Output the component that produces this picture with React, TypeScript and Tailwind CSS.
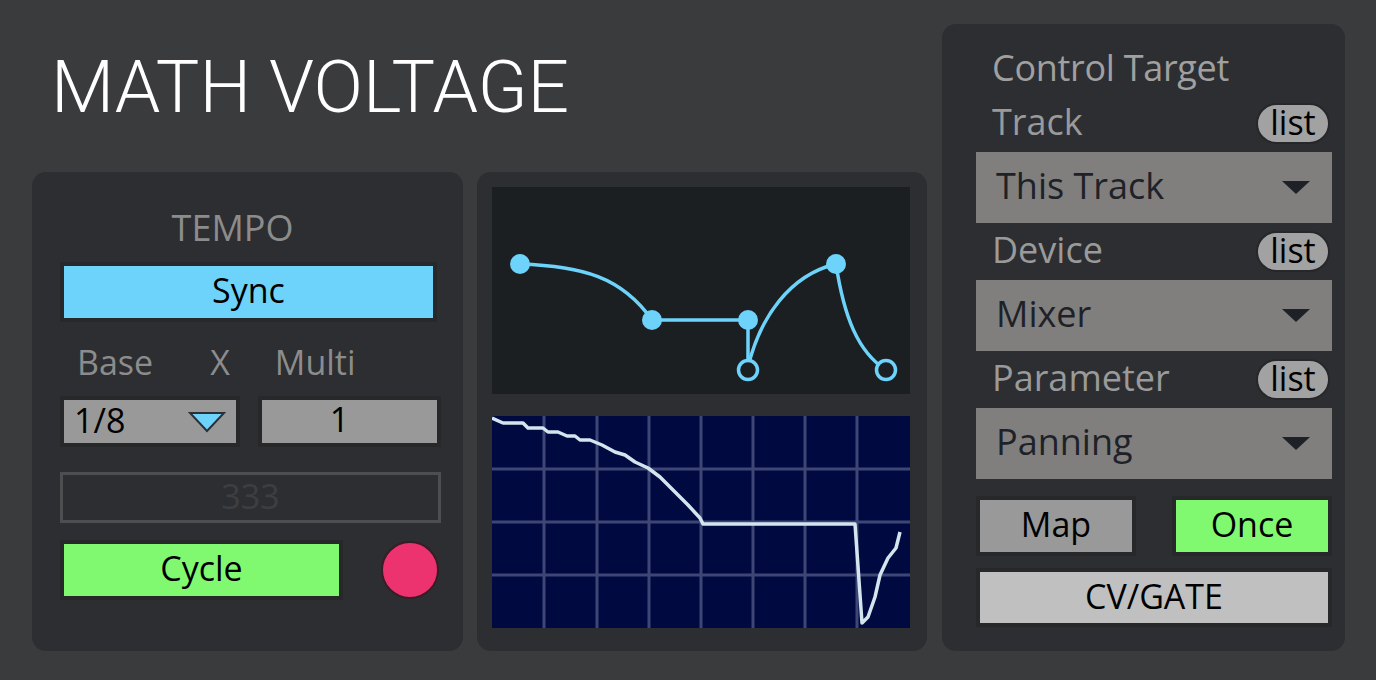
import React from 'react';

const font = "font-['Open_Sans',sans-serif]";

const Caret = ({ color = '#1e2228' }: { color?: string }) => (
  <svg width="28" height="14" viewBox="0 0 28 14">
    <polygon points="0,0 28,0 14,13" fill={color} />
  </svg>
);

const ListPill = () => (
  <div className="w-[74px] h-[41px] rounded-full bg-[#a2a2a2] border-2 border-[#26272a] flex items-center justify-center text-[34px] leading-none text-black pb-[3px]">
    list
  </div>
);

const Dropdown = ({ label }: { label: string }) => (
  <div className="h-[71px] bg-[#807f7d] flex items-center justify-between pl-[20px] pr-[22px]">
    <span className="text-[36px] leading-none text-[#1e2228] pb-[4px]">{label}</span>
    <Caret />
  </div>
);

const TargetRow = ({ label }: { label: string }) => (
  <div className="h-[57px] flex items-center justify-between pl-[16px] pr-[2px]">
    <span className="text-[36px] leading-none text-[#9a9a9a] pb-[4px]">{label}</span>
    <ListPill />
  </div>
);

const EnvelopeEditor = () => (
  <svg width="418" height="207" className="block bg-[#1c1f21]">
    <g fill="none" stroke="#6dd3fb" strokeWidth="3.5">
      <path d="M28,77 C90,79 130,90 160,133" />
      <path d="M160,133 L256,133 L256,183" />
      <path d="M256,180 C268,130 298,88 344,77" />
      <path d="M344,77 C352,130 366,165 394,183" />
    </g>
    <g fill="#6dd3fb">
      <circle cx="28" cy="77" r="10" />
      <circle cx="160" cy="133" r="10" />
      <circle cx="256" cy="133" r="10" />
      <circle cx="344" cy="77" r="10" />
    </g>
    <g fill="#1c1f21" stroke="#6dd3fb" strokeWidth="3.5">
      <circle cx="256" cy="183" r="9.5" />
      <circle cx="394" cy="183" r="9.5" />
    </g>
  </svg>
);

const scopePoints =
  '0,2 11,7 31,7 36,12 51,12 56,16 66,16 75,20 83,20 88,24 98,24 110,29 123,36 133,39 143,46 156,52 168,61 183,76 196,89 208,102 211,108 363,108 370,207 376,201 383,181 388,159 396,142 404,132 408,116';

const Scope = () => (
  <svg width="418" height="212" className="block bg-[#010a40]">
    <g stroke="#3f4675" strokeWidth="3">
      {[52, 105, 157, 209, 261, 313, 365].map((x) => (
        <line key={x} x1={x} y1="0" x2={x} y2="212" />
      ))}
      {[53, 106, 159].map((y) => (
        <line key={y} x1="0" y1={y} x2="418" y2={y} />
      ))}
    </g>
    <polyline points={scopePoints} fill="none" stroke="#d3e6ee" strokeWidth="3.5" strokeLinejoin="round" />
  </svg>
);

export default function App() {
  return (
    <div className={`w-[1376px] h-[680px] bg-[#3a3b3d] flex pl-[32px] pt-[24px] gap-[15px] ${font}`}>
      <div className="flex flex-col w-[895px]">
        {/* Title */}
        <h1 className="h-[148px] pl-[19px] pt-[27px] text-[73px] leading-none font-light text-white font-['Roboto',sans-serif]">
          MATH VOLTAGE
        </h1>

        <div className="flex gap-[14px]">
          {/* Tempo panel */}
          <div className="w-[431px] h-[479px] rounded-[14px] bg-[#2d2e31] flex flex-col pl-[28px] pr-[22px] pt-[38px]">
            <div className="text-center text-[36px] leading-none text-[#8c8c8c] pr-[36px]">TEMPO</div>
            <div className="mt-[16px] mr-[4px] h-[60px] p-[4px] bg-[#27282a]">
              <div className="h-full bg-[#6dd3fb] flex items-center justify-center text-[34px] leading-none text-black pb-[4px]">Sync</div>
            </div>
            <div className="mt-[20px] h-[40px] flex items-center text-[34px] leading-none text-[#8c8c8c]">
              <span className="ml-[17px]">Base</span>
              <span className="ml-[57px]">X</span>
              <span className="ml-[45px]">Multi</span>
            </div>
            <div className="mt-[14px] flex justify-between">
              <div className="w-[180px] h-[51px] p-[4px] bg-[#27282a]">
                <div className="h-full bg-[#999999] flex items-center justify-between pl-[10px] pr-[10px]">
                  <span className="text-[34px] leading-none text-black pb-[4px]">1/8</span>
                  <svg width="38" height="24" viewBox="0 0 38 24">
                    <polygon points="2,3 36,3 19,21" fill="#6dd3fb" stroke="#2a3035" strokeWidth="2" />
                  </svg>
                </div>
              </div>
              <div className="w-[183px] h-[51px] p-[4px] bg-[#27282a]">
                <div className="h-full bg-[#999999] flex items-center justify-center text-[34px] leading-none text-black pb-[6px] pr-[20px]">1</div>
              </div>
            </div>
            <div className="mt-[25px] h-[51px] border-[3px] border-[#4d4e50] flex items-center justify-center text-[34px] leading-none text-[#3d3e41] pb-[4px]">
              333
            </div>
            <div className="mt-[17px] flex items-center justify-between">
              <div className="w-[283px] h-[60px] p-[4px] bg-[#27282a]">
                <div className="h-full bg-[#80f970] flex items-center justify-center text-[34px] leading-none text-black pb-[4px]">Cycle</div>
              </div>
              <div className="w-[58px] h-[58px] rounded-full bg-[#ec3370] border-2 border-[#3a1c26] mr-[2px]" />
            </div>
          </div>

          {/* Envelope / scope panel */}
          <div className="w-[450px] h-[479px] rounded-[14px] bg-[#2d2e31] flex flex-col p-[15px] gap-[22px]">
            <EnvelopeEditor />
            <Scope />
          </div>
        </div>
      </div>

      {/* Control target panel */}
      <div className="w-[403px] h-[627px] rounded-[14px] bg-[#2d2e31] flex flex-col pl-[34px] pr-[13px] pt-[21px]">
        <div className="pl-[16px] text-[36px] leading-none text-[#a0a0a0] h-[50px] flex items-center pb-[4px] tracking-[-0.3px]">Control Target</div>
        <TargetRow label="Track" />
        <Dropdown label="This Track" />
        <TargetRow label="Device" />
        <Dropdown label="Mixer" />
        <TargetRow label="Parameter" />
        <Dropdown label="Panning" />
        <div className="mt-[17px] flex justify-between">
          <div className="w-[160px] h-[60px] p-[4px] bg-[#27282a]">
            <div className="h-full bg-[#999999] flex items-center justify-center text-[34px] leading-none text-black pb-[4px]">Map</div>
          </div>
          <div className="w-[160px] h-[60px] p-[4px] bg-[#27282a]">
            <div className="h-full bg-[#80f970] flex items-center justify-center text-[34px] leading-none text-black pb-[4px]">Once</div>
          </div>
        </div>
        <div className="mt-[12px] h-[59px] p-[4px] bg-[#27282a]">
          <div className="h-full bg-[#c0c0c0] flex items-center justify-center text-[34px] leading-none text-black pb-[4px]">CV/GATE</div>
        </div>
      </div>
    </div>
  );
}
